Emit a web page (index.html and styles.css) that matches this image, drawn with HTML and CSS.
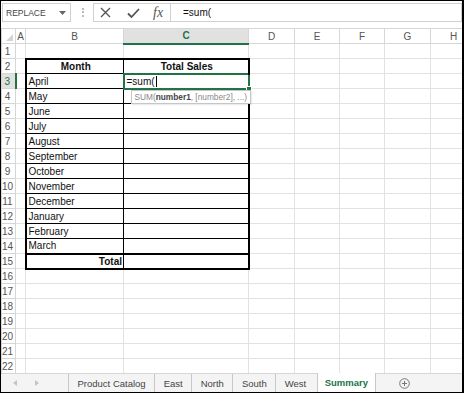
FILE: index.html
```html
<!DOCTYPE html>
<html lang="en">
<head>
    <meta charset="UTF-8">
    <title>Sales Summary</title>
    <link rel="stylesheet" href="styles.css">
</head>
<body>
    <div class="window">
        <div class="formula-bar">
            <div class="name-box">
                <span>REPLACE</span>
                <svg width="7" height="4" viewBox="0 0 7 4"><path d="M0 0h7L3.5 4z" fill="#666"/></svg>
            </div>
            <div class="grip"></div>
            <div class="fx-box">
                <svg class="ic-cancel" width="11" height="11" viewBox="0 0 11 11"><path d="M1 1l9 9M10 1l-9 9" stroke="#555" stroke-width="1.4" fill="none"/></svg>
                <svg class="ic-enter" width="13" height="10" viewBox="0 0 13 10"><path d="M1 5.5l3.5 3.5L12 1" stroke="#555" stroke-width="1.8" fill="none"/></svg>
                <span class="fx">fx</span>
            </div>
            <div class="formula-input">=sum(</div>
        </div>

        <div class="sheet">
            <table class="grid">
                <colgroup>
                    <col style="width:14px"><col style="width:10px"><col style="width:98px"><col style="width:125px">
                    <col style="width:46px"><col style="width:45px"><col style="width:45px"><col style="width:46px"><col style="width:46px">
                </colgroup>
                <tr class="head">
                    <th class="corner"><span class="tri"></span></th><th>A</th><th>B</th><th class="sel">C</th><th>D</th><th>E</th><th>F</th><th>G</th><th>H</th>
                </tr>
                <tr><th class="rh">1</th><td></td><td></td><td></td><td></td><td></td><td></td><td></td><td></td></tr>
                <tr><th class="rh">2</th><td></td><td class="t tl tt hd">Month</td><td class="t tr tt hd">Total Sales</td><td></td><td></td><td></td><td></td><td></td></tr>
                <tr><th class="rh sel">3</th><td></td><td class="t tl">April</td>
                    <td class="t tr active">=sum(<span class="caret"></span>
                        <span class="handle"></span>
                        <div class="tip">SUM(<b>number1</b>, [number2], ...)</div>
                    </td><td></td><td></td><td></td><td></td><td></td></tr>
                <tr><th class="rh">4</th><td></td><td class="t tl">May</td><td class="t tr"></td><td></td><td></td><td></td><td></td><td></td></tr>
                <tr><th class="rh">5</th><td></td><td class="t tl">June</td><td class="t tr"></td><td></td><td></td><td></td><td></td><td></td></tr>
                <tr><th class="rh">6</th><td></td><td class="t tl">July</td><td class="t tr"></td><td></td><td></td><td></td><td></td><td></td></tr>
                <tr><th class="rh">7</th><td></td><td class="t tl">August</td><td class="t tr"></td><td></td><td></td><td></td><td></td><td></td></tr>
                <tr><th class="rh">8</th><td></td><td class="t tl">September</td><td class="t tr"></td><td></td><td></td><td></td><td></td><td></td></tr>
                <tr><th class="rh">9</th><td></td><td class="t tl">October</td><td class="t tr"></td><td></td><td></td><td></td><td></td><td></td></tr>
                <tr><th class="rh">10</th><td></td><td class="t tl">November</td><td class="t tr"></td><td></td><td></td><td></td><td></td><td></td></tr>
                <tr><th class="rh">11</th><td></td><td class="t tl">December</td><td class="t tr"></td><td></td><td></td><td></td><td></td><td></td></tr>
                <tr><th class="rh">12</th><td></td><td class="t tl">January</td><td class="t tr"></td><td></td><td></td><td></td><td></td><td></td></tr>
                <tr><th class="rh">13</th><td></td><td class="t tl">February</td><td class="t tr"></td><td></td><td></td><td></td><td></td><td></td></tr>
                <tr><th class="rh">14</th><td></td><td class="t tl">March</td><td class="t tr"></td><td></td><td></td><td></td><td></td><td></td></tr>
                <tr><th class="rh">15</th><td></td><td class="t tl tt tb total">Total</td><td class="t tr tt tb"></td><td></td><td></td><td></td><td></td><td></td></tr>
                <tr><th class="rh">16</th><td></td><td></td><td></td><td></td><td></td><td></td><td></td><td></td></tr>
                <tr><th class="rh">17</th><td></td><td></td><td></td><td></td><td></td><td></td><td></td><td></td></tr>
                <tr><th class="rh">18</th><td></td><td></td><td></td><td></td><td></td><td></td><td></td><td></td></tr>
                <tr><th class="rh">19</th><td></td><td></td><td></td><td></td><td></td><td></td><td></td><td></td></tr>
                <tr><th class="rh">20</th><td></td><td></td><td></td><td></td><td></td><td></td><td></td><td></td></tr>
                <tr><th class="rh">21</th><td></td><td></td><td></td><td></td><td></td><td></td><td></td><td></td></tr>
                <tr><th class="rh">22</th><td></td><td></td><td></td><td></td><td></td><td></td><td></td><td></td></tr>
            </table>
        </div>

        <div class="tabs">
            <div class="nav">
                <svg width="4" height="6" viewBox="0 0 4 6"><path d="M4 0v6L0 3z" fill="#c4c4c4"/></svg>
                <svg width="4" height="6" viewBox="0 0 4 6"><path d="M0 0v6l4-3z" fill="#c4c4c4"/></svg>
            </div>
            <div class="tab">Product Catalog</div>
            <div class="tab">East</div>
            <div class="tab">North</div>
            <div class="tab">South</div>
            <div class="tab">West</div>
            <div class="tab active">Summary</div>
            <svg class="add" width="11" height="11" viewBox="0 0 11 11"><circle cx="5.5" cy="5.5" r="4.8" stroke="#777" fill="none"/><path d="M5.5 3v5M3 5.5h5" stroke="#777"/></svg>
        </div>
    </div>
</body>
</html>
```

FILE: styles.css
```css
* {
    box-sizing: border-box;
}

body {
    margin: 0;
    font-family: 'Liberation Sans', Arial, sans-serif;
    background: #fff;
}

.window {
    width: 464px;
    height: 393px;
    border: 1px solid #000;
    border-right-width: 2px;
    display: flex;
    flex-direction: column;
    overflow: hidden;
}

/* formula bar */
.formula-bar {
    height: 27px;
    flex-shrink: 0;
    display: flex;
    align-items: flex-start;
    padding: 2px 0 0 1px;
}

.name-box {
    width: 69px;
    height: 19px;
    border: 1px solid #d0d0d0;
    display: flex;
    align-items: center;
    justify-content: space-between;
    padding: 0 4px 0 3px;
    font-size: 8.5px;
    color: #444;
}

.grip {
    width: 2px;
    height: 9px;
    margin: 5px 0 0 11px;
    border-left: 2px dotted #bbb;
}

.fx-box {
    width: 77px;
    height: 19px;
    margin-left: 9px;
    border: 1px solid #d0d0d0;
    border-right: none;
    display: flex;
    align-items: center;
    padding-left: 6px;
}

.ic-enter {
    margin-left: 16px;
}

.fx {
    margin-left: 13px;
    font-family: 'Liberation Serif', serif;
    font-style: italic;
    font-size: 14px;
    color: #555;
}

.formula-input {
    flex: 1;
    height: 19px;
    border: 1px solid #d0d0d0;
    padding-left: 12px;
    font-size: 10px;
    line-height: 17px;
    color: #111;
}

/* sheet grid */
.sheet {
    flex: 1;
    overflow: hidden;
}

.grid {
    table-layout: fixed;
    width: 476px;
    border-collapse: collapse;
    font-size: 10px;
}

.grid tr {
    height: 15px;
}

.grid td,
.grid th {
    padding: 0 0 0 2px;
    height: 15px;
    border: 1px solid #e2e2e2;
    white-space: nowrap;
    overflow: visible;
    line-height: 13px;
}

.grid td {
    color: #111;
}

.head th {
    font-weight: normal;
    color: #555;
    text-align: center;
    padding: 0;
    border-color: #d6d6d6;
}

.head th.sel {
    background: #e1e1e1;
    color: #217346;
    font-weight: bold;
    border-bottom: 2px solid #217346;
}

.corner {
    position: relative;
}

.tri {
    position: absolute;
    right: 2px;
    bottom: 2px;
    width: 0;
    height: 0;
    border-left: 7px solid transparent;
    border-bottom: 7px solid #d4d4d4;
}

.rh {
    font-weight: normal;
    color: #555;
    text-align: center;
    padding: 0 2px 0 0 !important;
    border-color: #d6d6d6 !important;
    overflow: hidden;
}

.rh.sel {
    background: #e1e1e1;
    color: #217346;
    border-right: 2px solid #217346 !important;
}

/* bordered table B2:C15 */
.grid td.t {
    border: 1px solid #000;
}

.grid td.tl {
    border-left-width: 2px;
}

.grid td.tr {
    border-right-width: 2px;
}

.grid td.tt {
    border-top-width: 2px;
}

.grid td.tb {
    border-bottom-width: 2px;
}

.hd {
    font-weight: bold;
    text-align: center;
}

.total {
    font-weight: bold;
    text-align: right;
    padding-right: 1px !important;
}

/* active cell */
.grid td.active {
    position: relative;
    border: 2px solid #217346;
}

.caret {
    display: inline-block;
    width: 1px;
    height: 11px;
    background: #000;
    vertical-align: -2px;
    margin-left: 1px;
}

.handle {
    position: absolute;
    right: -4px;
    bottom: -4px;
    width: 6px;
    height: 6px;
    background: #217346;
    border: 1px solid #fff;
}

.tip {
    position: absolute;
    top: 15px;
    left: 6px;
    z-index: 2;
    height: 14px;
    padding: 0 3px;
    white-space: nowrap;
    background: #fff;
    border: 1px solid #c6c6c6;
    box-shadow: 1px 1px 1px rgba(0, 0, 0, 0.08);
    font-size: 8.3px;
    line-height: 12px;
    color: #888;
}

.tip b {
    color: #444;
}

/* sheet tabs */
.tabs {
    height: 19px;
    flex-shrink: 0;
    display: flex;
    align-items: stretch;
    background: #f4f4f4;
    border-top: 1px solid #d6d6d6;
    font-size: 9.5px;
    color: #444;
}

.nav {
    width: 67px;
    display: flex;
    align-items: center;
    gap: 18px;
    padding-left: 12px;
}

.tab {
    display: flex;
    align-items: center;
    padding: 0 8.5px;
    border-left: 1px solid #c8c8c8;
}

.tab.active {
    margin-left: 2px;
    margin-top: -1px;
    padding: 0 7px;
    background: #fff;
    border-right: 1px solid #c8c8c8;
    color: #217346;
    font-weight: bold;
}

.add {
    align-self: center;
    margin-left: 23px;
}
```
